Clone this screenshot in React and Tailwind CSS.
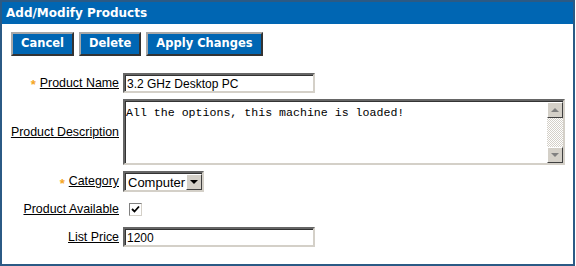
import { useState } from 'react'

const labelCls = "text-[12.4px] underline text-black font-['Liberation_Sans',Arial,sans-serif]"

function Star() {
  return <span className="mr-[4px] mt-[3px] text-[#f5a623] text-[13px] font-bold leading-none">*</span>
}

function Btn({ children }) {
  return (
    <button className="h-[24px] px-[8px] bg-[#0066b3] text-white text-[11.5px] font-bold font-['DejaVu_Sans',Verdana,sans-serif] border-2 border-t-[#a8a8a8] border-l-[#a8a8a8] border-b-[#333] border-r-[#333] leading-none">
      {children}
    </button>
  )
}

function Sunken({ className = '', children }) {
  return (
    <div className={`border-2 border-t-[#666] border-l-[#666] border-b-[#d4d0c8] border-r-[#d4d0c8] bg-white ${className}`}>
      <div className="h-full border-t border-l border-[#333] border-b-0 border-r-0">{children}</div>
    </div>
  )
}

export default function App() {
  const [checked, setChecked] = useState(true)

  return (
    <div className="w-[576px] h-[266px] bg-white font-['Liberation_Sans',Arial,sans-serif]">
      <div className="w-[575px] h-[266px] border-2 border-[#2b5a85]">
        {/* Header */}
        <div className="h-[22px] bg-[#0066b3] flex items-center pl-[4px]">
          <span className="text-white text-[12px] font-bold font-['DejaVu_Sans',Verdana,sans-serif]">Add/Modify Products</span>
        </div>

        {/* Toolbar */}
        <div className="flex gap-[5px] pl-[9px] pt-[8px]">
          <Btn>Cancel</Btn>
          <Btn>Delete</Btn>
          <Btn>Apply Changes</Btn>
        </div>

        {/* Form */}
        <div className="grid grid-cols-[117px_1fr] gap-x-[4px] mt-[17px] pr-[8px]">
          <div className="flex items-center justify-end h-[20px]">
            <Star />
            <span className={labelCls}>Product Name</span>
          </div>
          <Sunken className="w-[192px] h-[20px]">
            <div className="px-[1px] text-[12px] leading-[16px] text-black">3.2 GHz Desktop PC</div>
          </Sunken>

          <div className="flex items-center justify-end h-[66px] mt-[6px]">
            <span className={labelCls}>Product Description</span>
          </div>
          <Sunken className="h-[66px] mt-[6px] w-[442px]">
            <div className="flex h-full">
              <div className="flex-1 pl-0 pt-[4px] text-[11.6px] leading-[14px] font-['Liberation_Mono','Courier_New',monospace] text-black">
                All the options, this machine is loaded!
              </div>
              <div className="w-[16px] h-full flex flex-col bg-[repeating-conic-gradient(#d4d0c8_0%_25%,#ffffff_0%_50%)] bg-[length:2px_2px]">
                <div className="h-[16px] bg-[#d4d0c8] border border-t-white border-l-white border-b-[#404040] border-r-[#404040] flex items-center justify-center">
                  <div className="w-0 h-0 border-l-[4px] border-r-[4px] border-b-[4px] border-l-transparent border-r-transparent border-b-[#808080]" />
                </div>
                <div className="flex-1" />
                <div className="h-[16px] bg-[#d4d0c8] border border-t-white border-l-white border-b-[#404040] border-r-[#404040] flex items-center justify-center">
                  <div className="w-0 h-0 border-l-[4px] border-r-[4px] border-t-[4px] border-l-transparent border-r-transparent border-t-[#808080]" />
                </div>
              </div>
            </div>
          </Sunken>

          <div className="flex items-center justify-end h-[21px] mt-[6px]">
            <Star />
            <span className={labelCls}>Category</span>
          </div>
          <div className="mt-[6px]">
            <Sunken className="w-[81px] h-[21px]">
              <div className="flex h-full">
                <div className="flex-1 pl-[2px] text-[13px] leading-[17px] text-black">Computer</div>
                <div className="w-[16px] h-full bg-[#d4d0c8] border border-t-white border-l-white border-b-[#404040] border-r-[#404040] flex items-center justify-center">
                  <div className="w-0 h-0 border-l-[4px] border-r-[4px] border-t-[4px] border-l-transparent border-r-transparent border-t-black" />
                </div>
              </div>
            </Sunken>
          </div>

          <div className="flex items-center justify-end h-[14px] mt-[10px]">
            <span className={labelCls}>Product Available</span>
          </div>
          <div className="mt-[10px] pl-[6px] flex items-center">
            <button
              onClick={() => setChecked(!checked)}
              className="w-[13px] h-[13px] border border-t-[#808080] border-l-[#808080] border-b-[#d4d0c8] border-r-[#d4d0c8] bg-white flex items-center justify-center"
            >
              {checked && (
                <svg width="9" height="9" viewBox="0 0 9 9">
                  <path d="M1 4 L3.5 6.5 L8 1.5" stroke="black" strokeWidth="1.8" fill="none" />
                </svg>
              )}
            </button>
          </div>

          <div className="flex items-center justify-end h-[20px] mt-[11px]">
            <span className={labelCls}>List Price</span>
          </div>
          <Sunken className="w-[192px] h-[20px] mt-[11px]">
            <div className="px-[1px] text-[12px] leading-[16px] text-black">1200</div>
          </Sunken>
        </div>
      </div>
    </div>
  )
}
